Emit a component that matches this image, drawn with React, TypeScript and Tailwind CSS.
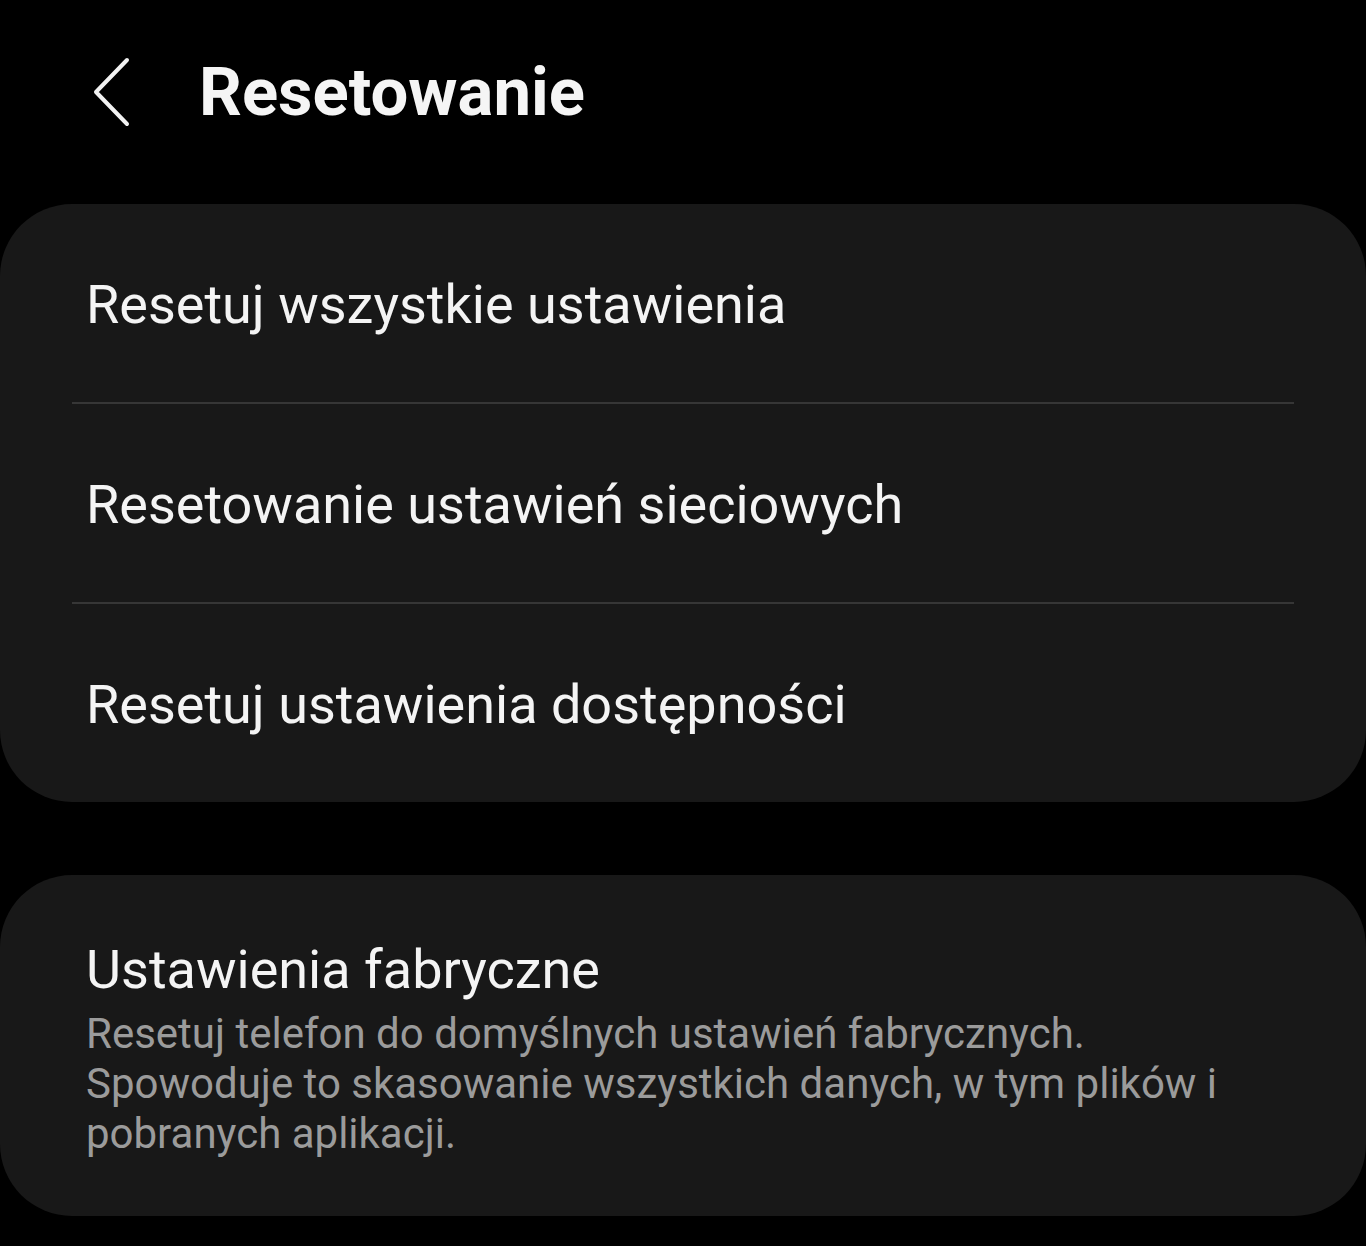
import React from "react";

const OPTIONS = [
  "Resetuj wszystkie ustawienia",
  "Resetowanie ustawień sieciowych",
  "Resetuj ustawienia dostępności",
];

function BackIcon() {
  return (
    <svg width="44" height="72" viewBox="0 0 44 72" fill="none" className="block">
      <polyline
        points="36,4 5,36 36,68"
        stroke="#f2f2f2"
        strokeWidth="4"
        strokeLinecap="round"
        strokeLinejoin="round"
      />
    </svg>
  );
}

export default function App() {
  return (
    <div
      className="min-h-[1246px] w-full bg-black text-white"
      style={{ fontFamily: "Roboto, 'Noto Sans', 'Liberation Sans', sans-serif" }}
    >
      <header className="flex h-[204px] items-center pb-[20px]">
        <div className="ml-[91px] flex h-[72px] w-[44px] items-center">
          <BackIcon />
        </div>
        <h1 className="ml-[64px] text-[67px] font-bold leading-none text-[#f5f5f5]">
          Resetowanie
        </h1>
      </header>

      <section className="rounded-[72px] bg-[#181818]">
        {OPTIONS.map((label, i) => (
          <div key={label}>
            {i > 0 && <div className="mx-[72px] h-[2px] bg-[#363636]" />}
            <div className="flex h-[198px] items-center px-[86px] pt-[4px]">
              <span className="text-[54px] leading-none text-[#f4f4f4]">{label}</span>
            </div>
          </div>
        ))}
      </section>

      <section className="mt-[73px] rounded-[72px] bg-[#181818] px-[86px] pt-[63px] pb-[57px]">
        <div className="text-[54px] leading-[64px] text-[#f4f4f4]">Ustawienia fabryczne</div>
        <p className="mt-[7px] max-w-[1160px] text-[42px] leading-[50px] text-[#9b9b9b]">
          Resetuj telefon do domyślnych ustawień fabrycznych.
          <br />
          Spowoduje to skasowanie wszystkich danych, w tym plików i
          <br />
          pobranych aplikacji.
        </p>
      </section>
    </div>
  );
}
